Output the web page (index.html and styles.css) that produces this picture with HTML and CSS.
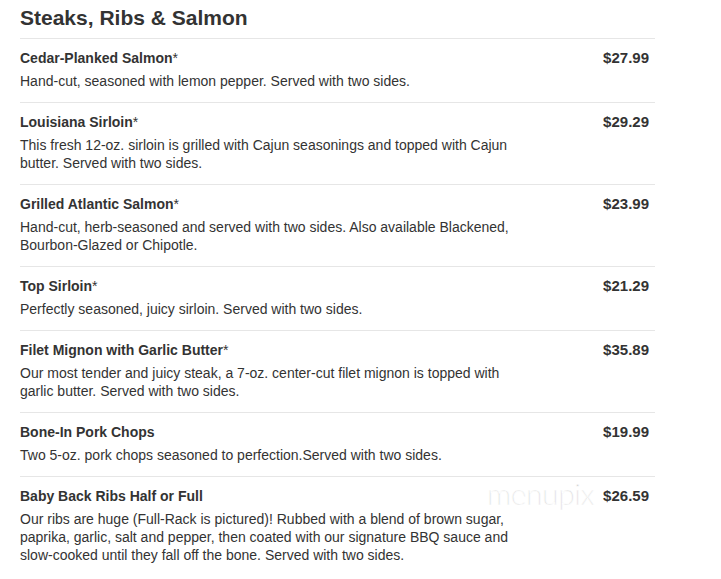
FILE: index.html
```html
<!DOCTYPE html>
<html lang="en">
<head>
<meta charset="utf-8">
<title>Steaks, Ribs &amp; Salmon</title>
<link rel="stylesheet" href="styles.css">
</head>
<body>
<section class="menu">
  <h1 class="menu-title">Steaks, Ribs &amp; Salmon</h1>
  <ul class="items">
    <li class="item">
      <div class="info">
        <h2 class="name">Cedar-Planked Salmon<span class="star">*</span></h2>
        <p class="desc">Hand-cut, seasoned with lemon pepper. Served with two sides.</p>
      </div>
      <div class="price">$27.99</div>
    </li>
    <li class="item">
      <div class="info">
        <h2 class="name">Louisiana Sirloin<span class="star">*</span></h2>
        <p class="desc">This fresh 12-oz. sirloin is grilled with Cajun seasonings and topped with Cajun butter. Served with two sides.</p>
      </div>
      <div class="price">$29.29</div>
    </li>
    <li class="item">
      <div class="info">
        <h2 class="name">Grilled Atlantic Salmon<span class="star">*</span></h2>
        <p class="desc">Hand-cut, herb-seasoned and served with two sides. Also available Blackened, Bourbon-Glazed or Chipotle.</p>
      </div>
      <div class="price">$23.99</div>
    </li>
    <li class="item">
      <div class="info">
        <h2 class="name">Top Sirloin<span class="star">*</span></h2>
        <p class="desc">Perfectly seasoned, juicy sirloin. Served with two sides.</p>
      </div>
      <div class="price">$21.29</div>
    </li>
    <li class="item">
      <div class="info">
        <h2 class="name">Filet Mignon with Garlic Butter<span class="star">*</span></h2>
        <p class="desc">Our most tender and juicy steak, a 7-oz. center-cut filet mignon is topped with garlic butter. Served with two sides.</p>
      </div>
      <div class="price">$35.89</div>
    </li>
    <li class="item">
      <div class="info">
        <h2 class="name">Bone-In Pork Chops</h2>
        <p class="desc">Two 5-oz. pork chops seasoned to perfection.Served with two sides.</p>
      </div>
      <div class="price">$19.99</div>
    </li>
    <li class="item item-last">
      <div class="info">
        <h2 class="name">Baby Back Ribs Half or Full</h2>
        <p class="desc">Our ribs are huge (Full-Rack is pictured)! Rubbed with a blend of brown sugar, paprika, garlic, salt and pepper, then coated with our signature BBQ sauce and slow-cooked until they fall off the bone. Served with two sides.</p>
      </div>
      <div class="price">$26.59</div>
      <span class="watermark">menupix</span>
    </li>
  </ul>
</section>
</body>
</html>
```
FILE: styles.css
```css
html, body {
  margin: 0;
  padding: 0;
  background: #ffffff;
}

body {
  font-family: "Liberation Sans", Arial, sans-serif;
  color: #333333;
}

.menu {
  width: 635px;
  padding: 0 0 0 20px;
}

.menu-title {
  margin: 0;
  padding-top: 6px;
  font-size: 21px;
  line-height: 24px;
  font-weight: bold;
  color: #333333;
  height: 32px;
}

.items {
  list-style: none;
  margin: 0;
  padding: 0;
}

.item {
  position: relative;
  display: grid;
  grid-template-columns: 1fr auto;
  border-top: 1px solid #e6e6e6;
  padding: 10px 0 12px;
}

.info {
  min-width: 0;
}

.name {
  margin: 0;
  font-size: 14px;
  line-height: 18px;
  font-weight: bold;
  color: #333333;
}

.star {
  font-weight: normal;
}

.desc {
  margin: 5px 0 0;
  max-width: 500px;
  font-size: 14px;
  line-height: 18px;
  color: #333333;
}

.price {
  padding-right: 6px;
  font-size: 15px;
  line-height: 18px;
  font-weight: bold;
  color: #333333;
}

.watermark {
  position: absolute;
  left: 467px;
  top: 1px;
  font-family: "Lato", "Open Sans", sans-serif;
  font-weight: 300;
  font-size: 30px;
  line-height: 30px;
  letter-spacing: -0.4px;
  color: #d6d6d6;
  -webkit-text-stroke: 0.7px #ffffff;
}
```
